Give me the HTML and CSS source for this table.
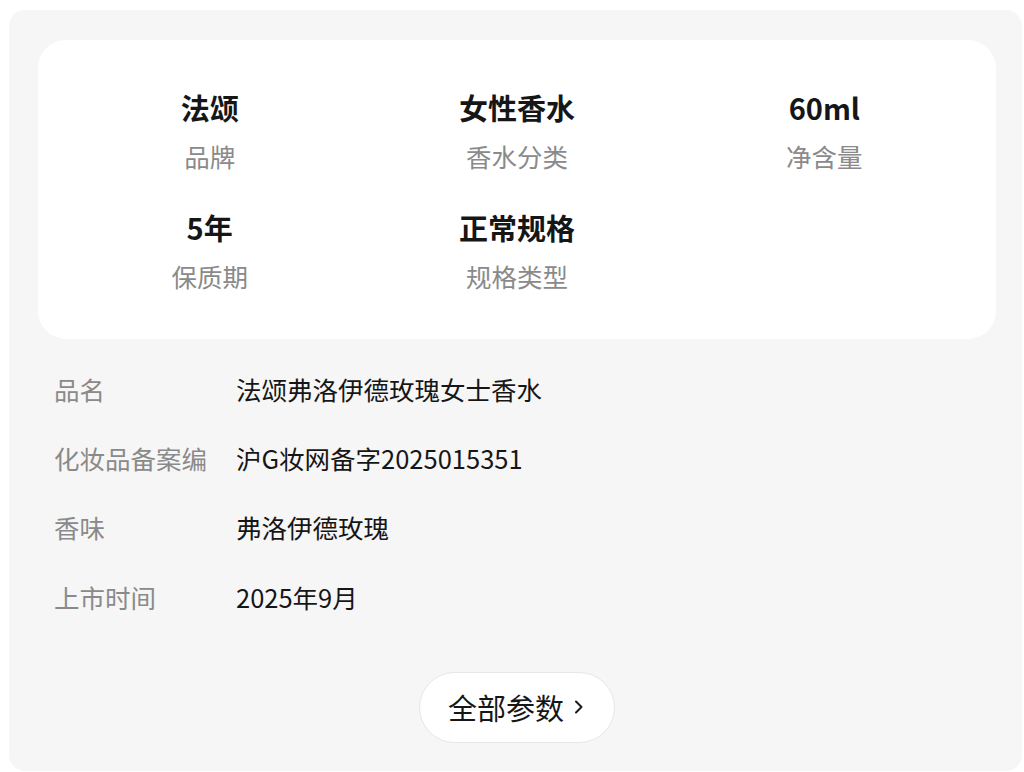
FILE: index.html
```html
<!DOCTYPE html>
<html lang="zh-CN">
<head>
<meta charset="utf-8">
<title>商品参数</title>
<link rel="stylesheet" href="styles.css">
</head>
<body>
<div class="panel">
  <div class="summary">
    <div class="cell"><div class="val">法颂</div><div class="lab">品牌</div></div>
    <div class="cell"><div class="val">女性香水</div><div class="lab">香水分类</div></div>
    <div class="cell"><div class="val">60ml</div><div class="lab">净含量</div></div>
    <div class="cell"><div class="val">5年</div><div class="lab">保质期</div></div>
    <div class="cell"><div class="val">正常规格</div><div class="lab">规格类型</div></div>
  </div>
  <div class="list">
    <div class="row"><div class="k">品名</div><div class="v">法颂弗洛伊德玫瑰女士香水</div></div>
    <div class="row"><div class="k">化妆品备案编</div><div class="v">沪G妆网备字2025015351</div></div>
    <div class="row"><div class="k">香味</div><div class="v">弗洛伊德玫瑰</div></div>
    <div class="row"><div class="k">上市时间</div><div class="v">2025年9月</div></div>
  </div>
  <div class="more-wrap">
    <button class="more">全部参数<svg class="chev" width="10" height="16" viewBox="0 0 10 16"><path d="M2 2.5 L7.5 8 L2 13.5" fill="none" stroke="#1a1a1a" stroke-width="2" stroke-linecap="round" stroke-linejoin="round"/></svg></button>
  </div>
</div>
</body>
</html>
```

FILE: styles.css
```css
html, body {
  margin: 0;
  padding: 0;
  background: #ffffff;
}
body {
  padding: 10px 2px 1px 9px;
  font-family: "Noto Sans CJK SC", "Noto Sans", sans-serif;
}
.panel {
  background: #f6f6f6;
  border-radius: 16px;
  height: 761px;
  box-sizing: border-box;
  padding: 30px 26px 0 29px;
}
.summary {
  background: #ffffff;
  border-radius: 28px;
  padding: 47px 18px 44px 18px;
  display: grid;
  grid-template-columns: repeat(3, 1fr);
  row-gap: 32px;
}
.cell {
  display: flex;
  flex-direction: column;
  align-items: center;
}
.val {
  font-size: 29px;
  font-weight: 700;
  line-height: 40px;
  color: #161616;
  margin-bottom: 10px;
}
.lab {
  font-size: 25.5px;
  line-height: 38px;
  color: #8a8a8a;
}
.list {
  display: flex;
  flex-direction: column;
  gap: 33.2px;
  padding: 32px 16px 0 16px;
}
.row {
  display: flex;
  line-height: 36px;
  font-size: 25.5px;
}
.k {
  width: 152px;
  flex: none;
  color: #8a8a8a;
  white-space: nowrap;
  margin-right: 30px;
}
.v {
  color: #161616;
}
.more-wrap {
  display: flex;
  justify-content: center;
  margin-top: 57px;
}
.more {
  height: 71px;
  box-sizing: border-box;
  padding: 0 30px 0 28px;
  border: 1.5px solid #e6e6e6;
  border-radius: 36px;
  background: #ffffff;
  font-family: inherit;
  font-size: 29px;
  color: #161616;
  display: flex;
  align-items: center;
  gap: 10px;
}
.chev {
  display: block;
}
```
